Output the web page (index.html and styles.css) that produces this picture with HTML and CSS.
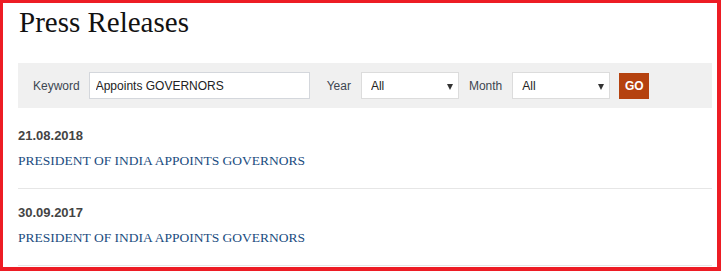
FILE: index.html
```html
<!DOCTYPE html>
<html>
<head>
<meta charset="utf-8">
<link rel="stylesheet" href="styles.css">
</head>
<body>
<div class="frame">
  <h1 class="title">Press Releases</h1>
  <form class="filter">
    <label class="lbl lbl-keyword">Keyword</label>
    <input class="keyword" type="text" value="Appoints GOVERNORS">
    <label class="lbl lbl-year">Year</label>
    <span class="sel">
      <select><option>All</option></select>
      <span class="arrow"></span>
    </span>
    <label class="lbl lbl-month">Month</label>
    <span class="sel">
      <select><option>All</option></select>
      <span class="arrow"></span>
    </span>
    <button class="go" type="button">GO</button>
  </form>
  <ul class="list">
    <li class="item">
      <div class="date">21.08.2018</div>
      <a class="link" href="#">PRESIDENT OF INDIA APPOINTS GOVERNORS</a>
    </li>
    <li class="item">
      <div class="date">30.09.2017</div>
      <a class="link" href="#">PRESIDENT OF INDIA APPOINTS GOVERNORS</a>
    </li>
  </ul>
</div>
</body>
</html>
```
FILE: styles.css
```css
html, body {
  margin: 0;
  padding: 0;
  background: #ffffff;
}
.frame {
  box-sizing: border-box;
  width: 721px;
  height: 271px;
  border-style: solid;
  border-color: #ed1c24;
  border-width: 3px 4px 4px 3px;
  padding: 0 5px 0 15px;
  overflow: hidden;
}
.title {
  margin: 1px 0 23px 1px;
  font-family: "Liberation Serif", "Times New Roman", serif;
  font-weight: normal;
  font-size: 29px;
  line-height: 36px;
  color: #111;
}
.filter {
  display: flex;
  align-items: center;
  height: 45px;
  background: #f0f0f0;
  padding-left: 15px;
  margin: 0;
  font-family: "Liberation Sans", Arial, sans-serif;
  font-size: 12px;
}
.lbl {
  color: #3d4650;
}
.lbl-keyword { margin-right: 9px; }
.lbl-year { margin-left: 17px; margin-right: 10px; }
.lbl-month { margin-left: 10px; margin-right: 10px; }
.keyword {
  box-sizing: border-box;
  width: 221px;
  height: 27px;
  border: 1px solid #d4d7dc;
  padding: 0 0 0 6px;
  margin: 0;
  font-family: "Liberation Sans", Arial, sans-serif;
  font-size: 12px;
  color: #222;
  background: #fff;
  outline: none;
}
.sel {
  position: relative;
  display: block;
  width: 98px;
  height: 27px;
}
.sel select {
  -webkit-appearance: none;
  appearance: none;
  box-sizing: border-box;
  width: 98px;
  height: 27px;
  border: 1px solid #dcdcdc;
  border-radius: 0;
  background: #fff;
  padding: 0 0 0 9px;
  margin: 0;
  font-family: "Liberation Sans", Arial, sans-serif;
  font-size: 12px;
  color: #222;
  outline: none;
}
.arrow {
  position: absolute;
  right: 6px;
  top: 12px;
  width: 0;
  height: 0;
  border-left: 3px solid transparent;
  border-right: 3px solid transparent;
  border-top: 6px solid #333;
  pointer-events: none;
}
.go {
  margin-left: 9px;
  width: 30px;
  height: 26px;
  padding: 0;
  border: none;
  background: #b5420f;
  color: #fff;
  font-family: "Liberation Sans", Arial, sans-serif;
  font-weight: bold;
  font-size: 12px;
}
.list {
  list-style: none;
  margin: 4px 0 0 0;
  padding: 0;
}
.item {
  padding: 15px 0 17px 0;
  border-bottom: 1px solid #e6e6e6;
}
.date {
  font-family: "Liberation Sans", Arial, sans-serif;
  font-weight: bold;
  font-size: 13px;
  line-height: 18px;
  color: #444;
  margin-bottom: 6px;
}
.link {
  display: block;
  font-family: "Liberation Serif", "Times New Roman", serif;
  font-size: 13.5px;
  line-height: 20px;
  color: #1a4c80;
  text-decoration: none;
}
```
